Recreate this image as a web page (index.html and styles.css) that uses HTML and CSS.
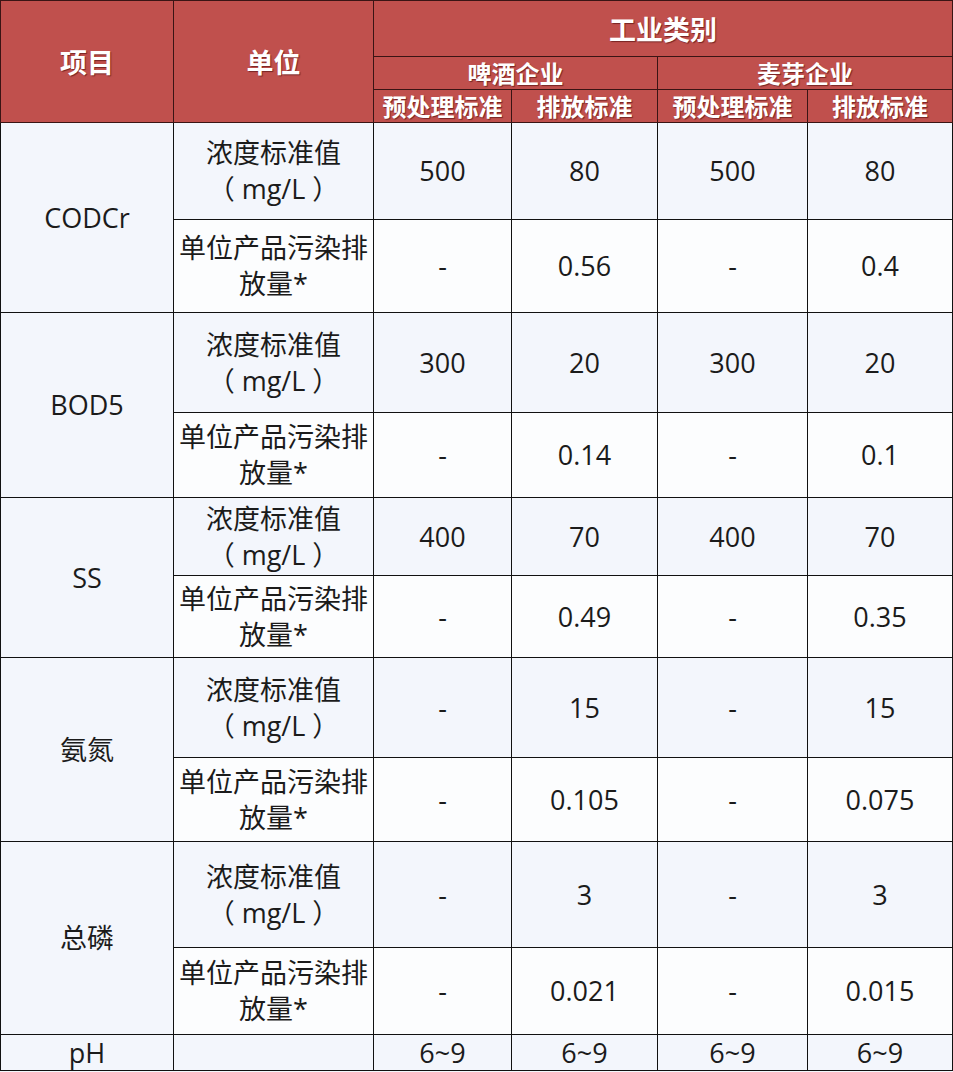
FILE: index.html
```html
<!DOCTYPE html>
<html lang="zh-CN">
<head>
<meta charset="utf-8">
<title>啤酒企业与麦芽企业排放标准</title>
<link rel="stylesheet" href="styles.css">
</head>
<body>
<table class="std">
  <colgroup>
    <col class="c1"><col class="c2"><col class="c3"><col class="c4"><col class="c5"><col class="c6">
  </colgroup>
  <thead>
    <tr class="h1">
      <th rowspan="3" class="big">项目</th>
      <th rowspan="3" class="big">单位</th>
      <th colspan="4" class="big">工业类别</th>
    </tr>
    <tr class="h2">
      <th colspan="2">啤酒企业</th>
      <th colspan="2">麦芽企业</th>
    </tr>
    <tr class="h3">
      <th>预处理标准</th><th>排放标准</th><th>预处理标准</th><th>排放标准</th>
    </tr>
  </thead>
  <tbody>
    <tr class="a r1a">
      <td rowspan="2" class="item">CODCr</td>
      <td>浓度标准值<br>（ mg/L ）</td><td>500</td><td>80</td><td>500</td><td>80</td>
    </tr>
    <tr class="b r1b">
      <td>单位产品污染排<br>放量*</td><td>-</td><td>0.56</td><td>-</td><td>0.4</td>
    </tr>
    <tr class="a r2a">
      <td rowspan="2" class="item">BOD5</td>
      <td>浓度标准值<br>（ mg/L ）</td><td>300</td><td>20</td><td>300</td><td>20</td>
    </tr>
    <tr class="b r2b">
      <td>单位产品污染排<br>放量*</td><td>-</td><td>0.14</td><td>-</td><td>0.1</td>
    </tr>
    <tr class="a r3a">
      <td rowspan="2" class="item">SS</td>
      <td>浓度标准值<br>（ mg/L ）</td><td>400</td><td>70</td><td>400</td><td>70</td>
    </tr>
    <tr class="b r3b">
      <td>单位产品污染排<br>放量*</td><td>-</td><td>0.49</td><td>-</td><td>0.35</td>
    </tr>
    <tr class="a r4a">
      <td rowspan="2" class="item">氨氮</td>
      <td>浓度标准值<br>（ mg/L ）</td><td>-</td><td>15</td><td>-</td><td>15</td>
    </tr>
    <tr class="b r4b">
      <td>单位产品污染排<br>放量*</td><td>-</td><td>0.105</td><td>-</td><td>0.075</td>
    </tr>
    <tr class="a r5a">
      <td rowspan="2" class="item">总磷</td>
      <td>浓度标准值<br>（ mg/L ）</td><td>-</td><td>3</td><td>-</td><td>3</td>
    </tr>
    <tr class="b r5b">
      <td>单位产品污染排<br>放量*</td><td>-</td><td>0.021</td><td>-</td><td>0.015</td>
    </tr>
    <tr class="a r6">
      <td class="item">pH</td><td></td><td>6~9</td><td>6~9</td><td>6~9</td><td>6~9</td>
    </tr>
  </tbody>
</table>
</body>
</html>
```

FILE: styles.css
```css
html, body {
  margin: 0;
  padding: 0;
  background: #f4f7fc;
}

.std {
  border-collapse: collapse;
  table-layout: fixed;
  width: 952px;
  font-family: "Open Sans", "Noto Sans CJK SC", sans-serif;
  color: #1b1b1b;
}

.c1 { width: 173px; }
.c2 { width: 200px; }
.c3 { width: 138px; }
.c4 { width: 146px; }
.c5 { width: 150px; }
.c6 { width: 145px; }

.std th,
.std td {
  border: 1px solid #111;
  padding: 0;
  text-align: center;
  vertical-align: middle;
}

.std th {
  background: #c0504d;
  color: #fff;
  font-family: "Noto Sans CJK SC", sans-serif;
  font-weight: 700;
  font-size: 24px;
  line-height: 28px;
  text-shadow: 1px 1px 1px rgba(60, 0, 0, 0.55);
  border-color: #3a1414;
}

.std th.big {
  font-size: 27px;
}

.h1 { height: 56px; }
.h2 { height: 33px; }
.h3 { height: 33px; }

.std td {
  font-size: 27px;
  line-height: 36px;
  letter-spacing: 0;
}

.std tr.a td { background: #f3f6fc; }
.std tr.b td { background: #fcfdfe; }
.std td.item { background: #f5f8fd; }

.r1a { height: 97px; }
.r1b { height: 93px; }
.r2a { height: 100px; }
.r2b { height: 85px; }
.r3a { height: 78px; }
.r3b { height: 82px; }
.r4a { height: 100px; }
.r4b { height: 84px; }
.r5a { height: 106px; }
.r5b { height: 87px; }
.r6 { height: 36px; }

.r6 td {
  line-height: 30px;
}
```
